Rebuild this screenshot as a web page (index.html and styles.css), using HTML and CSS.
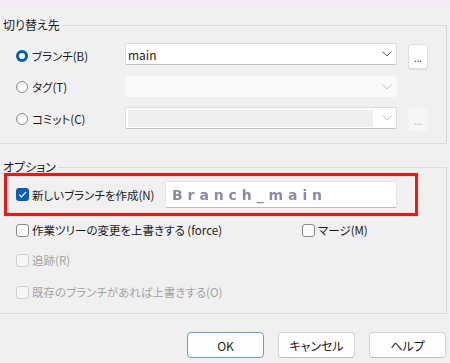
FILE: index.html
```html
<!DOCTYPE html>
<html lang="ja">
<head>
    <meta charset="UTF-8">
    <meta name="viewport" content="width=device-width, initial-scale=1.0">
    <title>切り替え</title>
    <link rel="stylesheet" href="styles.css">
</head>
<body>
    <div class="top-strip"></div>

    <fieldset class="group">
        <legend>切り替え先</legend>

        <div class="target-row row-branch">
            <label class="choice"><span class="radio on"></span>ブランチ(B)</label>
            <div class="combo top">
                <span class="combo-text">main</span>
                <svg class="chev" width="10" height="6" viewBox="0 0 10 6"><polyline points="0.5,0.5 5,5 9.5,0.5" fill="none" stroke="#5c5c5c" stroke-width="1"/></svg>
            </div>
            <button class="more bottom">...</button>
        </div>

        <div class="target-row row-tag">
            <label class="choice"><span class="radio"></span>タグ(T)</label>
            <div class="combo disabled">
                <span class="combo-text"></span>
                <svg class="chev" width="10" height="6" viewBox="0 0 10 6"><polyline points="0.5,0.5 5,5 9.5,0.5" fill="none" stroke="#c4c4c4" stroke-width="1"/></svg>
            </div>
        </div>

        <div class="target-row row-commit">
            <label class="choice"><span class="radio"></span>コミット(C)</label>
            <div class="combo top commit">
                <span class="combo-field"></span>
                <svg class="chev" width="10" height="6" viewBox="0 0 10 6"><polyline points="0.5,0.5 5,5 9.5,0.5" fill="none" stroke="#c4c4c4" stroke-width="1"/></svg>
            </div>
            <button class="more disabled">...</button>
        </div>
    </fieldset>

    <fieldset class="group options">
        <legend>オプション</legend>

        <div class="highlight">
            <label class="check-label new-branch"><span class="check on"><svg width="9" height="7" viewBox="0 0 9 7"><polyline points="1,3.6 3.4,6 8,1" fill="none" stroke="#fff" stroke-width="1.2"/></svg></span>新しいブランチを作成(N)</label>
            <div class="name-input"><span class="masked">Branch_main</span></div>
        </div>

        <div class="opt-row first">
            <label class="check-label force"><span class="check"></span>作業ツリーの変更を上書きする (force)</label>
            <label class="check-label"><span class="check"></span>マージ(M)</label>
        </div>
        <div class="opt-row">
            <label class="check-label disabled"><span class="check"></span>追跡(R)</label>
        </div>
        <div class="opt-row">
            <label class="check-label disabled"><span class="check"></span>既存のブランチがあれば上書きする(O)</label>
        </div>
    </fieldset>

    <div class="buttons">
        <button class="btn default">OK</button>
        <button class="btn">キャンセル</button>
        <button class="btn">ヘルプ</button>
    </div>
</body>
</html>
```

FILE: styles.css
```css
* {
    margin: 0;
    padding: 0;
    box-sizing: border-box;
}

body {
    width: 450px;
    height: 363px;
    overflow: hidden;
    background: #f0f0f0;
    color: #1b1b1b;
    font-family: "Noto Sans CJK JP", "Noto Sans", sans-serif;
    font-size: 11.5px;
    font-feature-settings: "palt";
}

.top-strip {
    height: 2px;
    background: #f6e9f5;
}

/* group boxes */
.group {
    margin: 17px 3px 0 0;
    padding: 12px 0 12px 0;
    border: 1px solid #dadada;
    border-left: none;
    min-width: 0;
}

.group legend {
    padding: 0 2px 0 3px;
    line-height: 12px;
    font-size: 12px;
}

.options {
    padding-top: 0;
    padding-bottom: 5px;
}

/* target rows */
.target-row {
    display: flex;
    align-items: center;
}

.row-branch {
    height: 26px;
    margin-bottom: 7px;
}

.row-tag {
    height: 21px;
    margin-bottom: 10px;
}

.row-commit {
    height: 24px;
}

.choice {
    width: 125px;
    padding-left: 16px;
    display: flex;
    align-items: center;
    gap: 4px;
}

.radio {
    width: 12px;
    height: 12px;
    border-radius: 50%;
    border: 1px solid #8a8a8a;
    background: #f9f9f9;
    position: relative;
}

.radio.on {
    border: none;
    background: #005fb8;
}

.radio.on:after {
    content: '';
    position: absolute;
    top: 3px;
    left: 3px;
    width: 6px;
    height: 6px;
    border-radius: 50%;
    background: #fff;
}

.combo {
    width: 272px;
    height: 22px;
    background: #fff;
    border: 1px solid #dcdcdc;
    border-bottom-color: #c2c2c2;
    border-radius: 2px;
    display: flex;
    align-items: center;
    padding: 0 4px 0 2px;
}

.combo.top {
    align-self: flex-start;
}

.combo.disabled {
    height: 21px;
    background: #f9f9f9;
    border-color: #f9f9f9;
}

.combo-text {
    flex: 1;
    font-size: 12px;
}

.combo-field {
    flex: 1;
    height: 17px;
    margin-right: 9px;
    background: #efefef;
}

.chev {
    display: block;
}

.more {
    width: 20px;
    height: 25px;
    margin-left: 11px;
    background: #fdfdfd;
    border: 1px solid #dedede;
    border-radius: 3px;
    box-shadow: 0 1px 1px rgba(0, 0, 0, 0.08);
    font-family: "Noto Sans", sans-serif;
    font-size: 10px;
    color: #333;
    line-height: 14px;
    padding-top: 3px;
}

.more.bottom {
    align-self: flex-end;
}

.more.disabled {
    height: 24px;
    background: #f6f6f6;
    border-color: #f3f3f3;
    box-shadow: none;
    color: #b5b5b5;
}

/* options */
.highlight {
    margin-left: 4px;
    width: 414px;
    height: 43px;
    border: 3px solid #ff1010;
    display: flex;
    align-items: center;
    padding-left: 9px;
}

.check-label {
    display: flex;
    align-items: center;
    gap: 3px;
    white-space: nowrap;
}

.check {
    width: 13px;
    height: 13px;
    border: 1px solid #8a8a8a;
    border-radius: 3px;
    background: #fbfbfb;
    display: flex;
    align-items: center;
    justify-content: center;
}

.check.on {
    border: none;
    background: #005fb8;
}

.new-branch {
    width: 149px;
}

.name-input {
    width: 232px;
    height: 27px;
    background: #fff;
    border: 1px solid #e4e4e4;
    border-bottom-color: #bdbdbd;
    border-radius: 2px;
    display: flex;
    align-items: center;
    padding-left: 6px;
}

.masked {
    font-family: "DejaVu Sans", sans-serif;
    font-size: 14px;
    font-weight: bold;
    letter-spacing: 4.9px;
    color: #8c8aa6;
    filter: blur(0.7px);
}

.opt-row {
    height: 32px;
    display: flex;
    align-items: center;
    padding-left: 16px;
}

.opt-row.first {
    height: 28px;
}

.force {
    width: 286px;
}

.check-label.disabled {
    color: #a3a3a3;
}

.check-label.disabled .check {
    border-color: #cfcfcf;
    background: #f5f5f5;
}

/* dialog buttons */
.buttons {
    display: flex;
    justify-content: flex-end;
    gap: 14px;
    margin-top: 18px;
    padding-right: 4px;
}

.btn {
    width: 77px;
    height: 26px;
    background: #fdfdfd;
    border: 1px solid #d3d3d3;
    border-bottom-color: #bdbdbd;
    border-radius: 4px;
    font-family: "Noto Sans CJK JP", "Noto Sans", sans-serif;
    font-size: 12px;
    font-feature-settings: "palt";
    color: #1b1b1b;
}

.btn.default {
    border-color: #6c9bd0;
}
```
